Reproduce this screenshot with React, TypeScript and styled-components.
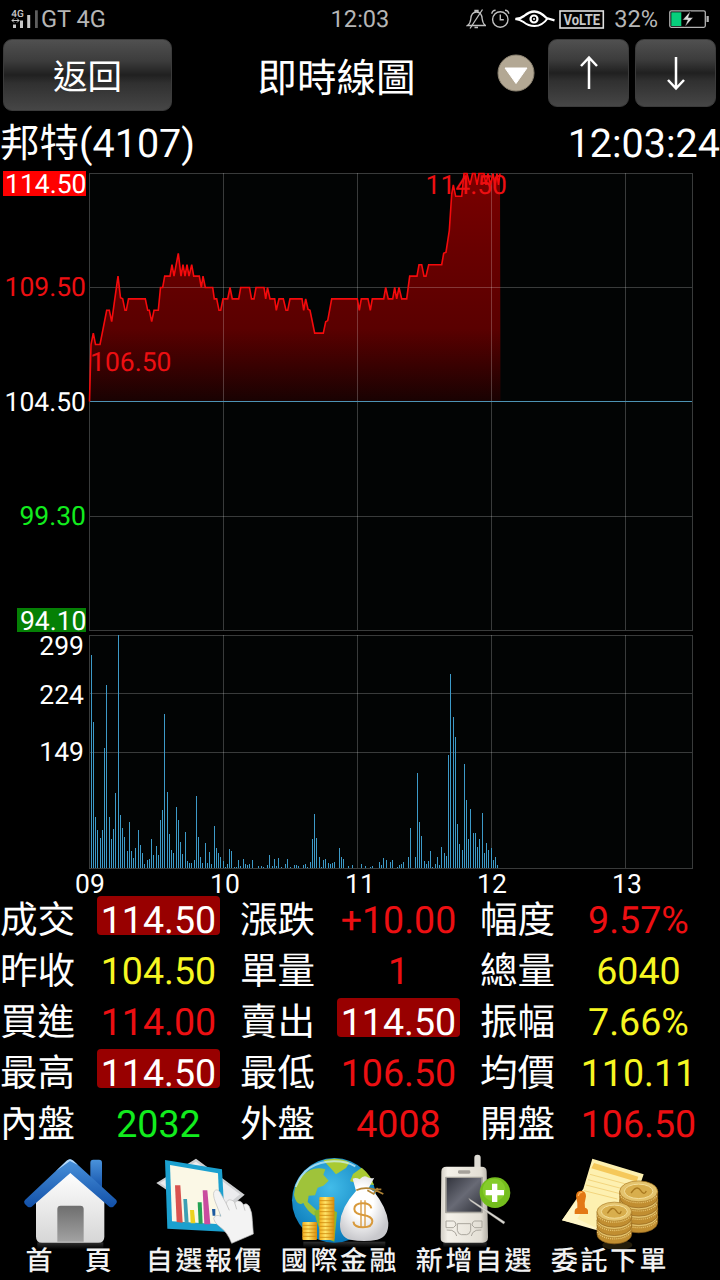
import React from "react";
import styled, { createGlobalStyle } from "styled-components";

const GlobalStyle = createGlobalStyle`
  body {
    margin: 0;
    background: #000000;
    font-family: Roboto, "Noto Sans CJK TC", sans-serif;
    text-rendering: geometricPrecision;
    color: #ffffff;
  }
`;

const RED = "#ec0f12";
const YELLOW = "#f6f622";
const GREEN = "#12ec1e";
const GRID = "rgba(255, 255, 255, 0.22)";

/* ---------- chart data ---------- */

// x position, price
const prices: [number, number][] = [
  [89.5, 104.5], [91, 107], [93.3, 107.5], [95.5, 107], [100, 107], [106.7, 108.5],
  [109.3, 108.5], [111.7, 108], [114.5, 108.9], [118, 110], [120.5, 109.05], [122.7, 109],
  [125, 108.5], [126.3, 108.5], [128.5, 109], [145.3, 109], [147.7, 108.5], [149.3, 108.5],
  [151.7, 108], [154, 108.5], [158.3, 108.5], [160.5, 109.5], [162.7, 109.5], [164.7, 110],
  [170, 110], [172, 110.5], [174, 110], [178.3, 111], [181, 110], [183, 110.5],
  [185, 110], [187, 110.5], [189, 110], [191.7, 110.5], [193.7, 110], [199.3, 110],
  [201.3, 109.5], [203, 110], [205.3, 109.5], [212.7, 109.5], [214.3, 109], [216.7, 109],
  [219, 108.5], [220.7, 108.5], [223, 109], [227.7, 109], [230, 109.5], [232.3, 109],
  [238.7, 109], [240.7, 109.5], [249.5, 109.5], [251.5, 109], [254, 109], [256, 109.5],
  [264, 109.5], [265.7, 109], [267.5, 109.5], [270, 109], [274.7, 109], [276.3, 108.5],
  [279, 109], [283.3, 109], [286, 108.5], [287.7, 108.5], [290, 109], [302, 109],
  [303.7, 108.5], [305.7, 109], [308, 108.55], [310, 108.5], [314.7, 107.5], [323.3, 107.5],
  [325.7, 108], [327.7, 108.05], [331.7, 109], [357.3, 109], [359.3, 108.5], [361.3, 109],
  [368, 109], [370.3, 108.5], [372.3, 109], [383.7, 109], [385.7, 109.5], [388.3, 109],
  [392.7, 109], [394.7, 109.5], [396.7, 109], [399, 109.5], [401.7, 109], [406.7, 109],
  [409.7, 110], [417, 110], [419, 110.5], [421.7, 110.5], [424, 110], [426, 110],
  [428.7, 110.5], [441.7, 110.5], [443.7, 111], [446, 111.05], [449.3, 112], [451.7, 113.6],
  [453.3, 114], [455.7, 113.5], [461.7, 113.5], [464, 114.5], [467, 114.5], [470, 114],
  [472.5, 114.5], [475, 114.5], [477, 114], [479, 114.5], [484, 114.5], [486, 114],
  [488, 114.5], [490.5, 114], [493, 114.5], [495, 114], [497, 114.5], [498.5, 114], [500, 114.5],
];

// x position, bar height
const volumes: [number, number][] = [
  [91, 213], [93, 146], [95, 51], [97, 38], [100, 30], [102, 38], [104, 120], [106, 183],
  [109, 51], [111, 29], [113, 39], [115, 75], [118, 233], [120, 53], [122, 40], [124, 31],
  [127, 17], [129, 46], [131, 17], [133, 10], [135, 20], [138, 38], [140, 23], [142, 15],
  [144, 4], [147, 8], [149, 9], [151, 29], [153, 13], [156, 22], [158, 13], [160, 48],
  [162, 58], [164, 154], [167, 76], [169, 34], [171, 18], [173, 15], [176, 61], [178, 48],
  [180, 26], [182, 14], [185, 36], [187, 7], [189, 5], [191, 5], [194, 8], [196, 72],
  [198, 31], [200, 11], [202, 5], [205, 25], [207, 5], [209, 16], [211, 4], [214, 42],
  [216, 20], [218, 15], [220, 11], [223, 7], [225, 1], [227, 4], [229, 19], [231, 17],
  [234, 1], [236, 1], [238, 8], [240, 2], [243, 9], [245, 4], [247, 3], [249, 4],
  [252, 8], [258, 2], [261, 2], [263, 1], [267, 3], [269, 13], [272, 2], [274, 9],
  [276, 2], [278, 10], [281, 1], [285, 4], [287, 9], [290, 1], [294, 3], [296, 3],
  [298, 2], [303, 3], [305, 4], [307, 1], [310, 6], [312, 29], [314, 54], [316, 30],
  [319, 11], [321, 1], [323, 8], [325, 9], [328, 5], [330, 4], [332, 5], [334, 6],
  [339, 20], [341, 11], [343, 9], [348, 2], [352, 3], [361, 4], [365, 2], [370, 1],
  [372, 2], [379, 6], [381, 3], [383, 10], [386, 8], [390, 6], [392, 8], [397, 1],
  [399, 3], [401, 4], [403, 6], [408, 11], [410, 40], [415, 11], [417, 95], [419, 46],
  [421, 32], [424, 7], [426, 4], [428, 7], [430, 17], [432, 1], [435, 4], [437, 11],
  [439, 3], [441, 21], [444, 15], [446, 12], [448, 113], [450, 194], [453, 151], [455, 131],
  [457, 44], [459, 24], [462, 18], [464, 104], [466, 68], [468, 29], [470, 59], [473, 35],
  [475, 35], [477, 21], [479, 29], [482, 55], [484, 15], [486, 25], [488, 18], [491, 20],
  [493, 8], [495, 11], [497, 3],
];

const hours = [
  { label: "09", x: 90 },
  { label: "10", x: 225 },
  { label: "11", x: 360 },
  { label: "12", x: 492 },
  { label: "13", x: 627 },
];

const priceY = (p: number) => 401.5 - (p - 104.5) * 22.8;

/* ---------- layout ---------- */

const Screen = styled.div`
  width: 720px;
  height: 1280px;
  overflow: hidden;
  display: flex;
  flex-direction: column;
  background: #000000;

  svg {
    display: block;
    flex: none;
  }
`;

const StatusBar = styled.div`
  height: 37px;
  flex: none;
  display: grid;
  grid-template-columns: 1fr auto 1fr;
  align-items: center;
  font-size: 23.6px;
  line-height: 38px;
  color: #b6b6b6;
`;

const StatusGroup = styled.div<{ $end?: boolean }>`
  display: flex;
  align-items: center;
  justify-content: ${(p) => (p.$end ? "flex-end" : "flex-start")};
  padding: ${(p) => (p.$end ? "0 10px 0 0" : "0 0 0 11px")};
`;

const StatusIcons = styled.div`
  display: flex;
  gap: 4px;
`;

const Battery = styled.span`
  margin: 0 11px 0 9px;
`;

const Toolbar = styled.div`
  height: 80px;
  flex: none;
  box-sizing: border-box;
  padding: 2px 4px 0 3px;
  display: flex;
  align-items: flex-start;
`;

const GlossButton = styled.button<{ $w: number; $h: number }>`
  width: ${(p) => p.$w}px;
  height: ${(p) => p.$h}px;
  flex: none;
  padding: 4px 0 0;
  border: 1px solid #3b3b3b;
  border-radius: 9px;
  background: linear-gradient(#505050 0%, #3c3c3c 30%, #202020 50%, #303030 62%, #464646 100%);
  color: #ffffff;
  font-family: inherit;
  font-size: 34.5px;
  line-height: 1;
  display: flex;
  align-items: center;
  justify-content: center;
`;

const Title = styled.div`
  flex: 1;
  padding-left: 4px;
  text-align: center;
  font-size: 39.6px;
  line-height: 80px;
`;

const Picker = styled.div`
  flex: none;
  margin: 15px 13px 0 0;
`;

const ArrowButtons = styled.div`
  display: flex;
  gap: 6px;

  button {
    padding: 0;
  }
`;

const StockRow = styled.div`
  height: 52px;
  flex: none;
  display: flex;
  justify-content: space-between;
  font-size: 39.5px;
  line-height: 54px;
`;

const ChartText = styled.text`
  font-size: 26.5px;
`;

const QuoteGrid = styled.div`
  flex: none;
  display: grid;
  grid-template-columns: repeat(3, 240px);
  grid-auto-rows: 51px;
`;

const QuoteCell = styled.div`
  display: flex;
  font-size: 37.6px;
  line-height: 54px;
`;

const QuoteLabel = styled.span`
  width: 97px;
  flex: none;
`;

const QuoteValue = styled.span<{ $color: string; $badge?: boolean }>`
  width: 123px;
  height: 39px;
  margin-top: 2px;
  line-height: 50px;
  text-align: center;
  white-space: nowrap;
  border-radius: 4px;
  color: ${(p) => p.$color};
  background: ${(p) => (p.$badge ? "#980000" : "transparent")};
`;

const TabBar = styled.div`
  flex: 1;
  display: flex;
`;

const Tab = styled.div`
  width: 135px;
  flex: none;
`;

const TabLabel = styled.div`
  padding-left: 5px;
  text-align: center;
  font-size: 27px;
  font-weight: 500;
  line-height: 24px;
  letter-spacing: 2.6px;
  white-space: pre;
  color: #f2f2f2;
  position: relative;
`;

/* ---------- status bar icons ---------- */

const SignalIcon = () => (
  <svg width="30" height="22" viewBox="11 7 30 22">
    <text x="11.3" y="16" fontSize="10" fontWeight="500" fill="#c8c8c8">4G</text>
    <path d="M12 19.5h7M14 17.5l-2 2 2 2M17 17.5l2 2-2 2" stroke="#c8c8c8" strokeWidth="1" fill="none" />
    <path d="M13 23.5h3v3.5h-3zM20 19.5h3V27h-3zM27.2 14h3v13h-3z" fill="#c8c8c8" />
    <path d="M35 9.3h2.8V27H35z" fill="#5e5e5e" />
  </svg>
);

const BellOffIcon = () => (
  <svg width="20" height="22" viewBox="463 7 20 22" fill="none" stroke="#c0c0c0" strokeWidth="1.3">
    <path d="M464.5 24.5c2-1.5 3-3.5 3.3-6.5.3-4.5 1.7-7 5.7-7s5.4 2.5 5.7 7c.3 3 1.3 5 3.3 6.5zM472 11V9.5h3V11M471.5 26.5h3.5" />
    <path d="M479.5 8.5l-12.5 19" />
  </svg>
);

const AlarmIcon = () => (
  <svg width="20" height="22" viewBox="490 7 20 22" fill="none" stroke="#c0c0c0" strokeWidth="1.4">
    <circle cx="500.3" cy="18.5" r="7.7" />
    <path d="M500.3 13.5v5.2h3.5M491.8 12.8c.2-2 1.7-3.5 3.8-3.6M508.8 12.8c-.2-2-1.7-3.5-3.8-3.6" />
  </svg>
);

const EyeIcon = () => (
  <svg width="41" height="22" viewBox="514 7 41 22" fill="none" stroke="#ffffff">
    <path d="M515.5 18q5-.2 8.500-3c3.500-3 6.500-4.500 10.500-4.500 5 0 8.500 3 12 6.500l8 2.300" strokeWidth="2.3" />
    <path d="M515.5 18q4.500.5 8 3c3 2.500 6.500 4 11 4 5 0 9.500-2.500 13-7.500" strokeWidth="2" />
    <circle cx="534" cy="18" r="3.5" strokeWidth="2.2" />
    <circle cx="534" cy="18" r="1" fill="#ffffff" stroke="none" />
  </svg>
);

const VolteIcon = () => (
  <svg width="46" height="22" viewBox="559 7 46 22">
    <rect x="560" y="10" width="43.3" height="17" fill="none" stroke="#e0e0e0" strokeWidth="1.6" />
    <text x="563.5" y="24" fontSize="15.5" fontWeight="700" fill="#c8c8c8" textLength="36.5" lengthAdjust="spacingAndGlyphs">
      VoLTE
    </text>
  </svg>
);

const BatteryIcon = () => (
  <svg width="41" height="22" viewBox="669 7 41 22">
    <rect x="669.8" y="9.8" width="35.5" height="16.5" rx="1.5" fill="none" stroke="#b4b4b4" strokeWidth="1.3" />
    <rect x="671.3" y="11.3" width="10" height="13.7" fill="#06cf7c" />
    <path d="M706.5 15h2.3v6h-2.3z" fill="#b4b4b4" />
    <path d="M690.5 10l-8 9h5l-2.700 7 8.400-9.500h-4.800z" fill="#dadada" stroke="#000000" strokeWidth="0.5" />
  </svg>
);

/* ---------- charts ---------- */

const PriceChart = () => {
  const line = prices.map(([x, p]) => `${x},${priceY(p).toFixed(1)}`).join(" ");
  return (
    <svg width="720" height="464" viewBox="0 169 720 464">
      <defs>
        <linearGradient id="fall" gradientUnits="userSpaceOnUse" x1="0" y1="173" x2="0" y2="402">
          <stop offset="0" stopColor="#7a0000" />
          <stop offset="0.35" stopColor="#680000" />
          <stop offset="0.68" stopColor="#5a0000" />
          <stop offset="1" stopColor="#180202" />
        </linearGradient>
      </defs>
      <rect x="89" y="173" width="604" height="458" fill="#020404" />
      <polygon points={`${line} 500.5,401.5 89.5,401.5`} fill="url(#fall)" />
      <g stroke={GRID} fill="none">
        <rect x="89.5" y="173.5" width="603" height="457" />
        <path d="M223.5 173v457M357.5 173v457M491.5 173v457M625.5 173v457M90 287.5h602M90 516.5h602" />
      </g>
      <rect x="90" y="401" width="602" height="1" fill="#4d93b4" />
      <polyline points={line} fill="none" stroke="#f40a0c" strokeWidth="1.6" />

      <ChartText x="90" y="371" fill={RED}>106.50</ChartText>
      <ChartText x="425.5" y="194" fill={RED}>114.50</ChartText>

      <rect x="3" y="171" width="83" height="25" fill="#ff0000" />
      <rect x="17" y="608" width="69" height="24" fill="#058005" />
      <g textAnchor="end">
        <ChartText x="86.5" y="193" fill="#ffffff">114.50</ChartText>
        <ChartText x="86" y="296" fill={RED}>109.50</ChartText>
        <ChartText x="86" y="411" fill="#ffffff">104.50</ChartText>
        <ChartText x="86" y="525" fill={GREEN}>99.30</ChartText>
        <ChartText x="86.5" y="630" fill="#ffffff">94.10</ChartText>
      </g>
    </svg>
  );
};

const VolumeChart = () => (
  <svg width="720" height="261" viewBox="0 633 720 261">
    <rect x="89" y="635" width="604" height="234" fill="#020404" />
    <g stroke={GRID} fill="none">
      <rect x="89.5" y="635.5" width="603" height="233" />
      <path d="M223.5 635v233M357.5 635v233M491.5 635v233M625.5 635v233M90 693.5h602M90 752.5h602" />
    </g>
    {volumes.map(([x, h]) => (
      <rect key={x} x={x} y={868 - h} width="1" height={h} fill="#3d9ac8" />
    ))}
    <g textAnchor="end" fill="#ffffff">
      <ChartText x="84" y="655">299</ChartText>
      <ChartText x="84" y="704">224</ChartText>
      <ChartText x="84" y="761">149</ChartText>
    </g>
    <g textAnchor="middle" fill="#ffffff">
      {hours.map((h) => (
        <ChartText key={h.label} x={h.x} y="893">{h.label}</ChartText>
      ))}
    </g>
  </svg>
);

/* ---------- tab icons ---------- */

const HomeIcon = () => (
  <svg width="135" height="100" viewBox="0 12 405 300">
    <defs>
      <linearGradient id="roof" x1="0" y1="0" x2="0" y2="1">
        <stop offset="0" stopColor="#4a93dc" />
        <stop offset="1" stopColor="#1250a8" />
      </linearGradient>
      <linearGradient id="wall" x1="0" y1="0" x2="0" y2="1">
        <stop offset="0" stopColor="#ffffff" />
        <stop offset="1" stopColor="#d6d6d6" />
      </linearGradient>
      <linearGradient id="door" x1="0" y1="0" x2="0" y2="1">
        <stop offset="0" stopColor="#6e6e6e" />
        <stop offset="1" stopColor="#a2a2a2" />
      </linearGradient>
      <linearGradient id="mirror" x1="0" y1="0" x2="0" y2="1">
        <stop offset="0" stopColor="#303030" />
        <stop offset="0.7" stopColor="#000000" />
      </linearGradient>
    </defs>
    <rect x="112" y="292" width="198" height="30" fill="url(#mirror)" />
    <rect x="271" y="44" width="35" height="90" rx="9" fill="url(#roof)" />
    <path d="M108 165L210 76l103 89v110q0 18-18 18H126q-18 0-18-18z" fill="url(#wall)" />
    <path d="M172 290V192q0-10 10-10h59q10 0 10 10v98z" fill="url(#door)" />
    <path d="M200 47q10-9 20 0l129 118q4 6-1 11l-8 9q-6 4-12 0L211 84 95 185q-6 4-12 0l-9-9q-4-6 1-11z" fill="url(#roof)" />
    <path d="M200 47q10-9 20 0l14 13-24-12-42 30z" fill="#b4d8f8" />
  </svg>
);

const QuotesIcon = () => (
  <svg width="135" height="100" viewBox="405 12 405 300">
    <path d="M469 114L588 41l146 108-94 80z" fill="#cfd0d2" />
    <path d="M480 114L588 50l132 98-85 70z" fill="#ececee" />
    <path d="M495 45l171 28 10 187-174-9z" fill="#1ba0cf" />
    <path d="M510 60l144 25 7 153-145-9z" fill="#fbf8e6" />
    <path d="M525 121h16l7 112-18-2z" fill="#d95450" />
    <path d="M550 162h11l5 72h-12z" fill="#3d9fb4" />
    <path d="M570 195h12l4 40h-14z" fill="#ecd21e" />
    <path d="M593 172h12l3 64h-12z" fill="#24a354" />
    <path d="M608 136h14l9 102h-18z" fill="#c94c9f" />
    <path d="M636 192h10v20h-8z" fill="#1d5ba0" />
    <path
      d="M642 140q9-12 18 2l19 34q2-14 14-11 8 1 11 8 6-9 16-4 7 3 10 10 9-7 17 4 10 18 10 44l3 40-65 28q-12-33-37-51-16-12-17-23 4-15 22-7l-17-43q-8-22-4-31z"
      fill="#f3f3f3"
      stroke="#bcbcbc"
      strokeWidth="2"
    />
    <path d="M679 176l9 20M704 173l6 20M730 179l5 18" stroke="#b0b0b0" strokeWidth="2" />
  </svg>
);

const GlobeIcon = () => (
  <svg width="135" height="100" viewBox="0 12 405 300">
    <defs>
      <radialGradient id="sea" cx="0.45" cy="0.35" r="0.65">
        <stop offset="0" stopColor="#42bce9" />
        <stop offset="1" stopColor="#0878b8" />
      </radialGradient>
      <linearGradient id="coin" x1="0" y1="0" x2="1" y2="0">
        <stop offset="0" stopColor="#f3ac1b" />
        <stop offset="0.4" stopColor="#ffe66a" />
        <stop offset="1" stopColor="#d98a08" />
      </linearGradient>
      <radialGradient id="bag" cx="0.45" cy="0.4" r="0.6">
        <stop offset="0.4" stopColor="#ffffff" />
        <stop offset="1" stopColor="#c9c9cd" />
      </radialGradient>
    </defs>
    <rect x="100" y="290" width="246" height="25" fill="url(#mirror)" />
    <circle cx="193" cy="166" r="127" fill="url(#sea)" />
    <path d="M94 95q33-34 72-22l-6 16 16 18-16 15-17 6-8 23-19 1-3 19 27 25-7 16q-24-17-33-38-20 11-28-24 1-29 22-55z" fill="#9fc33a" />
    <path d="M160 46q42-12 79 6l-11 17-30 19-14-16zM249 87l26-19q28 23 37 52l-45-5-27-6z" fill="#a9ca32" />
    <path d="M133 198l37-13 31 17-8 88q-47-12-60-92z" fill="#8cb82d" />
    <path d="M77 126q28-76 115-77 39 0 64 15" fill="none" stroke="#d3f3ff" strokeWidth="6" opacity="0.7" />
    <rect x="97" y="231" width="44" height="54" rx="3" fill="url(#coin)" />
    <rect x="148" y="156" width="45" height="129" rx="3" fill="url(#coin)" />
    <path
      d="M97 241h44M97 252h44M97 263h44M97 274h44M148 167h45M148 178h45M148 189h45M148 200h45M148 211h45M148 222h45M148 233h45M148 244h45M148 255h45M148 266h45M148 277h45"
      stroke="#cf8a10"
      strokeWidth="2.5"
    />
    <path d="M248 101q10-5 21 2 13-15 24-6 12 5 20 1l-17 31 15 10q39 48 44 94 1 42-33 51-39 8-81 0-32-8-31-48 2-48 48-98z" fill="url(#bag)" />
    <path d="M259 136q22-11 50-4l31 15M292 136l19 11 12-18M306 134l28-1" fill="none" stroke="#b18435" strokeWidth="5" />
    <path
      d="M304 190q-3-15-26-15-25 0-25 17 0 14 26 18 28 4 28 19 0 18-28 18-27 0-29-17"
      fill="none"
      stroke="#d89a3c"
      strokeWidth="6"
    />
    <path d="M273 166v82M285 166v82" stroke="#d89a3c" strokeWidth="4" />
  </svg>
);

const PhoneIcon = () => (
  <svg width="135" height="100" viewBox="405 12 405 300">
    <defs>
      <linearGradient id="lcd" x1="0" y1="0" x2="1" y2="1">
        <stop offset="0" stopColor="#33353e" />
        <stop offset="0.5" stopColor="#686a75" />
        <stop offset="1" stopColor="#30323a" />
      </linearGradient>
      <linearGradient id="shell" x1="0" y1="0" x2="1" y2="0">
        <stop offset="0" stopColor="#d2cec5" />
        <stop offset="0.15" stopColor="#f4f1e9" />
        <stop offset="0.85" stopColor="#e3dfd5" />
        <stop offset="1" stopColor="#b5b1a8" />
      </linearGradient>
    </defs>
    <rect x="520" y="292" width="130" height="22" fill="url(#mirror)" />
    <rect x="613" y="29" width="19" height="55" rx="9" fill="#dedbd4" />
    <path d="M514 80q0-15 15-15h106q15 0 15 15l4 197q0 16-16 16H526q-15 0-14-16z" fill="url(#shell)" />
    <rect x="564" y="76" width="37" height="10" rx="4" fill="#a5a19a" />
    <rect x="525" y="95" width="114" height="110" rx="3" fill="#a9a69f" />
    <rect x="530" y="99" width="104" height="101" fill="url(#lcd)" />
    <g fill="none" stroke="#aaa69d" strokeWidth="3">
      <path d="M528 228h22q8 2 8 12l-8 8h-22zM636 228h-22q-8 2-8 12l8 8h22zM530 255q18-2 26 8l4 10M634 255q-18-2-26 8l-4 10" />
      <path d="M562 236h40v20q-2 12-12 13h-16q-10-1-12-13z" />
    </g>
    <circle cx="675" cy="143" r="46" fill="#74bd1d" />
    <circle cx="672" cy="135" r="34" fill="#85cc2b" />
    <path d="M666 116h16v19h20v16h-20v20h-16v-20h-19v-16h19z" fill="#ffffff" />
    <path d="M596 160l109 71-4 6-100-69z" fill="#d8d6d0" stroke="#a09e99" strokeWidth="1" />
  </svg>
);

const CoinStack = ({ x, y, r, n }: { x: number; y: number; r: number; n: number }) => (
  <g>
    {Array.from({ length: n }, (_, i) => n - 1 - i).map((i) => (
      <g key={i}>
        <path
          d={`M${x - r} ${y + i * 25}v18a${r} ${r * 0.55} 0 0 0 ${r * 2} 0v-18z`}
          fill="#c18e31"
          stroke="#8f621b"
          strokeWidth="2"
        />
        <path
          d={`M${x - r + 3} ${y + 10 + i * 25}a${r} ${r * 0.55} 0 0 0 ${r * 2 - 6} 0`}
          fill="none"
          stroke="#e8c773"
          strokeWidth="9"
          strokeDasharray="3 3"
        />
        <ellipse cx={x} cy={y + i * 25} rx={r} ry={r * 0.55} fill="#e4c36d" stroke="#a97823" strokeWidth="2" />
      </g>
    ))}
    <ellipse cx={x} cy={y} rx={r * 0.75} ry={r * 0.38} fill="#d8ae4d" stroke="#f4df9b" strokeWidth="3" />
    <path d={`M${x - r * 0.4} ${y + 5}q${r * 0.3} -25 ${r * 0.5} -8t${r * 0.3} 2`} fill="none" stroke="#a8781f" strokeWidth="4" />
  </g>
);

const OrderIcon = () => (
  <svg width="135" height="100" viewBox="120 12 405 300">
    <ellipse cx="352" cy="300" rx="45" ry="15" fill="#241d0b" />
    <path d="M277 41l154 47-62 181-183-43 64-95z" fill="#fdf0b0" />
    <path d="M282 54l133 41-5 15-136-40z" fill="#f5c85a" />
    <path d="M270 88l123 33M264 104l118 31M258 120l110 28M252 137l100 25" stroke="#f3d57e" strokeWidth="3" />
    <path d="M186 226l56-77 12 35-22 37 88 43z" fill="#fff6c8" />
    <path d="M228 154q0-16 15-17 15 1 15 17l-4 20 1 14q9 2 9 10v9h-40v-9q0-8 8-10v-14z" fill="#e37815" />
    <path d="M235 153q2-12 12-11" fill="none" stroke="#ffb75c" strokeWidth="4" />
    <CoinStack x={416} y={139} r={57} n={4} />
    <CoinStack x={343} y={200} r={52} n={3} />
  </svg>
);

/* ---------- page ---------- */

type Quote = { label: string; value: string; color: string; badge?: boolean };

const quotes: Quote[] = [
  { label: "成交", value: "114.50", color: "#ffffff", badge: true },
  { label: "漲跌", value: "+10.00", color: RED },
  { label: "幅度", value: "9.57%", color: RED },
  { label: "昨收", value: "104.50", color: YELLOW },
  { label: "單量", value: "1", color: RED },
  { label: "總量", value: "6040", color: YELLOW },
  { label: "買進", value: "114.00", color: RED },
  { label: "賣出", value: "114.50", color: "#ffffff", badge: true },
  { label: "振幅", value: "7.66%", color: YELLOW },
  { label: "最高", value: "114.50", color: "#ffffff", badge: true },
  { label: "最低", value: "106.50", color: RED },
  { label: "均價", value: "110.11", color: YELLOW },
  { label: "內盤", value: "2032", color: GREEN },
  { label: "外盤", value: "4008", color: RED },
  { label: "開盤", value: "106.50", color: RED },
];

const tabs = [
  { label: "首　頁", icon: <HomeIcon /> },
  { label: "自選報價", icon: <QuotesIcon /> },
  { label: "國際金融", icon: <GlobeIcon /> },
  { label: "新增自選", icon: <PhoneIcon /> },
  { label: "委託下單", icon: <OrderIcon /> },
];

const App = () => (
  <>
    <GlobalStyle />
    <Screen>
      <StatusBar>
        <StatusGroup>
          <SignalIcon />
          GT 4G
        </StatusGroup>
        <span>12:03</span>
        <StatusGroup $end>
          <StatusIcons>
            <BellOffIcon />
            <AlarmIcon />
            <EyeIcon />
            <VolteIcon />
          </StatusIcons>
          <Battery>32%</Battery>
          <BatteryIcon />
        </StatusGroup>
      </StatusBar>

      <Toolbar>
        <GlossButton $w={169} $h={72}>返回</GlossButton>
        <Title>即時線圖</Title>
        <Picker>
          <svg width="38" height="38" viewBox="0 0 38 38">
            <circle cx="19" cy="19" r="18" fill="#b3a894" stroke="#8b8271" />
            <path d="M8 14h22L19 29.5z" fill="#ffffff" stroke="#ffffff" strokeLinejoin="round" />
          </svg>
        </Picker>
        <ArrowButtons>
          <GlossButton $w={81} $h={68}>
            <svg width="20" height="36" viewBox="0 0 20 36" fill="none" stroke="#ffffff" strokeWidth="2.5">
              <path d="M10 34V2.5M2 11l8-8.5 8 8.5" />
            </svg>
          </GlossButton>
          <GlossButton $w={81} $h={68}>
            <svg width="20" height="36" viewBox="0 0 20 36" fill="none" stroke="#ffffff" strokeWidth="2.5">
              <path d="M10 2v31.5M2 25l8 8.5 8-8.5" />
            </svg>
          </GlossButton>
        </ArrowButtons>
      </Toolbar>

      <StockRow>
        <span>邦特(4107)</span>
        <span>12:03:24</span>
      </StockRow>

      <PriceChart />
      <VolumeChart />

      <QuoteGrid>
        {quotes.map((q) => (
          <QuoteCell key={q.label}>
            <QuoteLabel>{q.label}</QuoteLabel>
            <QuoteValue $color={q.color} $badge={q.badge}>{q.value}</QuoteValue>
          </QuoteCell>
        ))}
      </QuoteGrid>

      <TabBar>
        {tabs.map((t) => (
          <Tab key={t.label}>
            {t.icon}
            <TabLabel>{t.label}</TabLabel>
          </Tab>
        ))}
      </TabBar>
    </Screen>
  </>
);

export default App;
